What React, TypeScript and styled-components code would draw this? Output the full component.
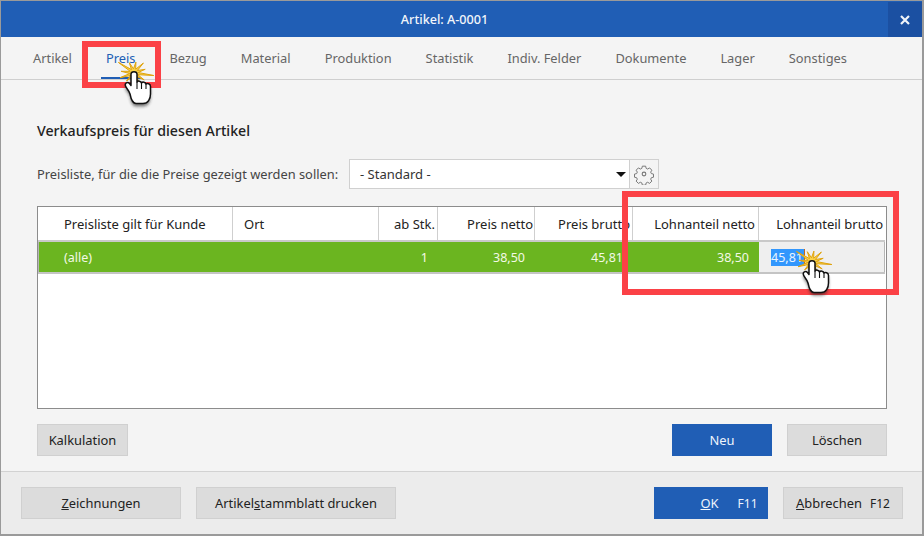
import React from 'react';
import styled, { createGlobalStyle } from 'styled-components';

const Global = createGlobalStyle`
  html, body { margin: 0; padding: 0; background: #f4f4f4; }
  * { box-sizing: border-box; }
`;

const Window = styled.div`
  position: relative; width: 924px; height: 536px; overflow: hidden;
  display: flex; flex-direction: column;
  border: 1px solid #9a9a9a; border-width: 1px 2px 2px 1px;
  background: #f4f4f4;
  font-family: "Noto Sans", "Open Sans", sans-serif; font-size: 13px; color: #333;
`;
const TitleBar = styled.div`
  height: 36px; flex: none; background: #205eb5; color: #f2f6fb; position: relative;
  display: flex; align-items: center; justify-content: center; font-size: 12.6px;
  padding-right: 34px;
`;
const TitleText = styled.span` font-weight: 500; `;
const Close = styled.div`
  position: absolute; right: 0; top: 1px; width: 34px; height: 35px; background: #1b50a2;
  display: flex; align-items: center; justify-content: center;
`;
const Tabs = styled.div`
  height: 43px; flex: none; display: flex; gap: 34px; padding-left: 32px;
  border-bottom: 1px solid #cfcfcf;
`;
const Tab = styled.div<{ $active?: boolean }>`
  position: relative; height: 42px; display: flex; align-items: center;
  color: ${p => (p.$active ? '#205eb5' : '#666')}; font-size: 12.85px; white-space: nowrap;
  ${p => p.$active && `&::after { content: ''; position: absolute; left: -5px; right: -6px; bottom: 0; height: 2px; background: #205eb5; }`}
`;
const Content = styled.div`
  flex: 1; display: flex; flex-direction: column; padding: 41px 35px 0 36px; min-height: 0;
`;
const Heading = styled.div`
  font-size: 14.2px; font-weight: 500; color: #222; height: 20px; line-height: 20px; white-space: nowrap;
`;
const FilterRow = styled.div`
  display: flex; align-items: center; margin-top: 18px; height: 30px;
`;
const FilterLabel = styled.div` width: 312px; font-size: 12.85px; color: #444; white-space: nowrap; `;
const SelectBox = styled.div`
  width: 281px; height: 30px; background: #fff; border: 1px solid #d0d0d0;
  display: flex; align-items: center; justify-content: space-between; padding: 0 3px 0 10px;
  font-size: 13px; color: #333;
`;
const Arrow = styled.div`
  width: 0; height: 0; border-left: 5px solid transparent; border-right: 5px solid transparent;
  border-top: 5px solid #111; margin-top: 1px;
`;
const GearBtn = styled.div`
  width: 30px; height: 30px; margin-left: -1px; border: 1px solid #d0d0d0;
  display: flex; align-items: center; justify-content: center;
`;
const Table = styled.div`
  margin-top: 17px; height: 203px; width: 850px; background: #fff; border: 1px solid #8c8c8c; padding-right: 1px;
`;
const COLS = '195px 146px 59px 97px 98px 126px 1fr';
const HeadRow = styled.div`
  display: grid; grid-template-columns: ${COLS}; height: 35px; border-bottom: 2px solid #c9c9c9;
`;
const HeadCell = styled.div<{ $right?: boolean; $pad?: number; $last?: boolean }>`
  display: flex; align-items: center; justify-content: ${p => (p.$right ? 'flex-end' : 'flex-start')};
  padding: ${p => (p.$right ? `0 ${p.$pad ?? 0}px 0 0` : `0 0 0 ${p.$pad ?? 0}px`)};
  border-right: ${p => (p.$last ? 'none' : '1px solid #cfcfcf')};
  font-size: 13px; color: #222; white-space: nowrap; overflow: hidden;
`;
const BodyRow = styled.div`
  display: grid; grid-template-columns: ${COLS}; height: 32px; border-bottom: 2px solid #c4c4c4;
  & > :first-child { box-shadow: inset 1px 0 #b5b5b5; }
`;
const BodyCell = styled.div<{ $right?: boolean; $pad?: number }>`
  background: #6bb520; color: #f3f9e6; display: flex; align-items: center;
  justify-content: ${p => (p.$right ? 'flex-end' : 'flex-start')};
  padding: ${p => (p.$right ? `0 ${p.$pad ?? 0}px 0 0` : `0 0 0 ${p.$pad ?? 0}px`)};
  font-size: 12.5px; white-space: nowrap; overflow: hidden;
`;
const EditCell = styled.div`
  background: #efefef; border-right: 1px solid #b5b5b5;
  display: flex; align-items: center; padding-left: 12px; font-size: 12.5px;
`;
const Selected = styled.span`
  background: #3297fd; color: #eaf4ff; height: 17px; line-height: 17px; padding-right: 1px;
  border-right: 1px solid #c96a10;
`;
const ActionRow = styled.div`
  display: flex; align-items: center; margin-top: 15px; height: 32px;
`;
const Spacer = styled.div` flex: 1; `;
const Btn = styled.div<{ $w: number; $primary?: boolean; $gap?: number }>`
  width: ${p => p.$w}px; height: 32px; flex: none; margin-left: ${p => p.$gap ?? 0}px;
  display: flex; align-items: center; justify-content: center; font-size: 12.9px; white-space: nowrap;
  background: ${p => (p.$primary ? '#205eb5' : '#dcdcdc')};
  border: ${p => (p.$primary ? 'none' : '1px solid #d0d0d0')};
  color: ${p => (p.$primary ? '#eef4fc' : '#222')};
`;
const Key = styled.span<{ $ml: number }>` font-size: 12px; margin-left: ${p => p.$ml}px; `;
const OkLabel = styled.span` margin-left: 36px; `;
const Footer = styled.div`
  height: 63px; flex: none; background: #ececec; border-top: 1px solid #d2d2d2;
  display: flex; align-items: center; padding: 0 19px 0 20px;
`;
const RedBox = styled.div<{ $x: number; $y: number; $w: number; $h: number }>`
  position: absolute; left: ${p => p.$x}px; top: ${p => p.$y}px; width: ${p => p.$w}px; height: ${p => p.$h}px;
  border: 6px solid #fb4146; pointer-events: none;
`;
const Cursor = styled.svg<{ $x: number; $y: number }>`
  position: absolute; left: ${p => p.$x - 20}px; top: ${p => p.$y - 14}px; width: 44px; height: 50px; overflow: visible;
`;

const starPoints = (() => {
  const radii = [13, 15, 12, 20, 13, 20, 13, 12, 15, 13, 20, 13];
  const pts: string[] = [];
  radii.forEach((r, i) => {
    const a = (i / radii.length) * Math.PI * 2 - Math.PI / 2 + 0.15;
    const b = a + Math.PI / radii.length;
    pts.push(`${(20 + Math.cos(a) * r).toFixed(1)},${(14 + Math.sin(a) * r * 0.85).toFixed(1)}`);
    pts.push(`${(20 + Math.cos(b) * 4.2).toFixed(1)},${(14 + Math.sin(b) * 4.2).toFixed(1)}`);
  });
  return pts.join(' ');
})();

const HAND = 'M16 35 C15 31 12.5 30 11.5 27 C10.5 24 13.5 22.5 15.5 24.5 L17 26.5 L17 15 C17 12 23 12 23 15 L23 23 C24 21.5 27 22 27.5 24 C28.5 22.5 31.5 23 32 25 C33 24 36.5 24.5 36.5 27.5 L36.5 35 C36.5 40 34 44.5 29 44.5 L22 44.5 C18.5 44.5 17 40 16 35 Z';

const Click = ({ x, y }: { x: number; y: number }) => (
  <Cursor $x={x} $y={y} viewBox="0 0 44 50">
    <defs>
      <filter id="sh" x="-40%" y="-40%" width="180%" height="180%">
        <feGaussianBlur stdDeviation="1.6" />
      </filter>
    </defs>
    <polygon points={starPoints} fill="#f9d24a" stroke="#dfa30e" strokeWidth="1" strokeLinejoin="miter" />
    <path d={HAND} fill="#222" opacity="0.6" filter="url(#sh)" transform="translate(0 3)" />
    <path d={HAND} fill="#fff" stroke="#111" strokeWidth="1.5" strokeLinejoin="round" />
    <path d="M23 23 L23 30 M27.5 24 L27.5 30 M32 25 L32 30" stroke="#111" strokeWidth="1.1" fill="none" />
  </Cursor>
);

const Gear = () => (
  <svg width="22" height="22" viewBox="0 0 24 24" fill="none" stroke="#777" strokeWidth="1.2" strokeLinejoin="round">
    <path d="M10 2.5h4l.6 2.7 1.8.8 2.4-1.4 2.7 2.8-1.4 2.3.8 1.8 2.6.6v3.8l-2.6.6-.8 1.8 1.4 2.3-2.7 2.8-2.4-1.4-1.8.8-.6 2.7h-4l-.6-2.7-1.8-.8-2.4 1.4-2.7-2.8 1.4-2.3-.8-1.8-2.6-.6v-3.8l2.6-.6.8-1.8-1.4-2.3 2.7-2.8 2.4 1.4 1.8-.8z" transform="translate(1.2 1.2) scale(.9)" />
    <circle cx="12" cy="12" r="2" />
  </svg>
);

const tabs = ['Artikel', 'Preis', 'Bezug', 'Material', 'Produktion', 'Statistik', 'Indiv. Felder', 'Dokumente', 'Lager', 'Sonstiges'];

export default function App() {
  return (
    <Window>
      <Global />
      <TitleBar>
        <TitleText>Artikel: A-0001</TitleText>
        <Close>
          <svg width="10" height="10" viewBox="0 0 10 10">
            <path d="M1 1 L9 9 M9 1 L1 9" stroke="#f0f4fa" strokeWidth="2.2" />
          </svg>
        </Close>
      </TitleBar>
      <Tabs>
        {tabs.map(t => (
          <Tab key={t} $active={t === 'Preis'}>{t}</Tab>
        ))}
      </Tabs>
      <Content>
        <Heading>Verkaufspreis für diesen Artikel</Heading>
        <FilterRow>
          <FilterLabel>Preisliste, für die die Preise gezeigt werden sollen:</FilterLabel>
          <SelectBox>
            <span>- Standard -</span>
            <Arrow />
          </SelectBox>
          <GearBtn><Gear /></GearBtn>
        </FilterRow>
        <Table>
          <HeadRow>
            <HeadCell $pad={26}>Preisliste gilt für Kunde</HeadCell>
            <HeadCell $pad={11}>Ort</HeadCell>
            <HeadCell $right $pad={2}>ab Stk.</HeadCell>
            <HeadCell $right $pad={1}>Preis netto</HeadCell>
            <HeadCell $right $pad={2}>Preis brutto</HeadCell>
            <HeadCell $right $pad={3}>Lohnanteil netto</HeadCell>
            <HeadCell $right $pad={2} $last>Lohnanteil brutto</HeadCell>
          </HeadRow>
          <BodyRow>
            <BodyCell $pad={26}>(alle)</BodyCell>
            <BodyCell />
            <BodyCell $right $pad={10}>1</BodyCell>
            <BodyCell $right $pad={10}>38,50</BodyCell>
            <BodyCell $right $pad={10}>45,81</BodyCell>
            <BodyCell $right $pad={10}>38,50</BodyCell>
            <EditCell><Selected>45,81</Selected></EditCell>
          </BodyRow>
        </Table>
        <ActionRow>
          <Btn $w={91}>Kalkulation</Btn>
          <Spacer />
          <Btn $w={100} $primary>Neu</Btn>
          <Btn $w={100} $gap={15}>Löschen</Btn>
        </ActionRow>
      </Content>
      <Footer>
        <Btn $w={160}><span><u>Z</u>eichnungen</span></Btn>
        <Btn $w={200} $gap={15}><span>Artikel<u>s</u>tammblatt drucken</span></Btn>
        <Spacer />
        <Btn $w={114} $primary>
          <OkLabel><u>O</u>K</OkLabel>
          <Key $ml={19}>F11</Key>
        </Btn>
        <Btn $w={120} $gap={15}>
          <span><u>A</u>bbrechen</span>
          <Key $ml={8}>F12</Key>
        </Btn>
      </Footer>
      <RedBox $x={81} $y={40} $w={79} $h={47} />
      <RedBox $x={621} $y={190} $w={277} $h={104} />
      <Click x={133} y={72} />
      <Click x={811} y={261} />
    </Window>
  );
}
